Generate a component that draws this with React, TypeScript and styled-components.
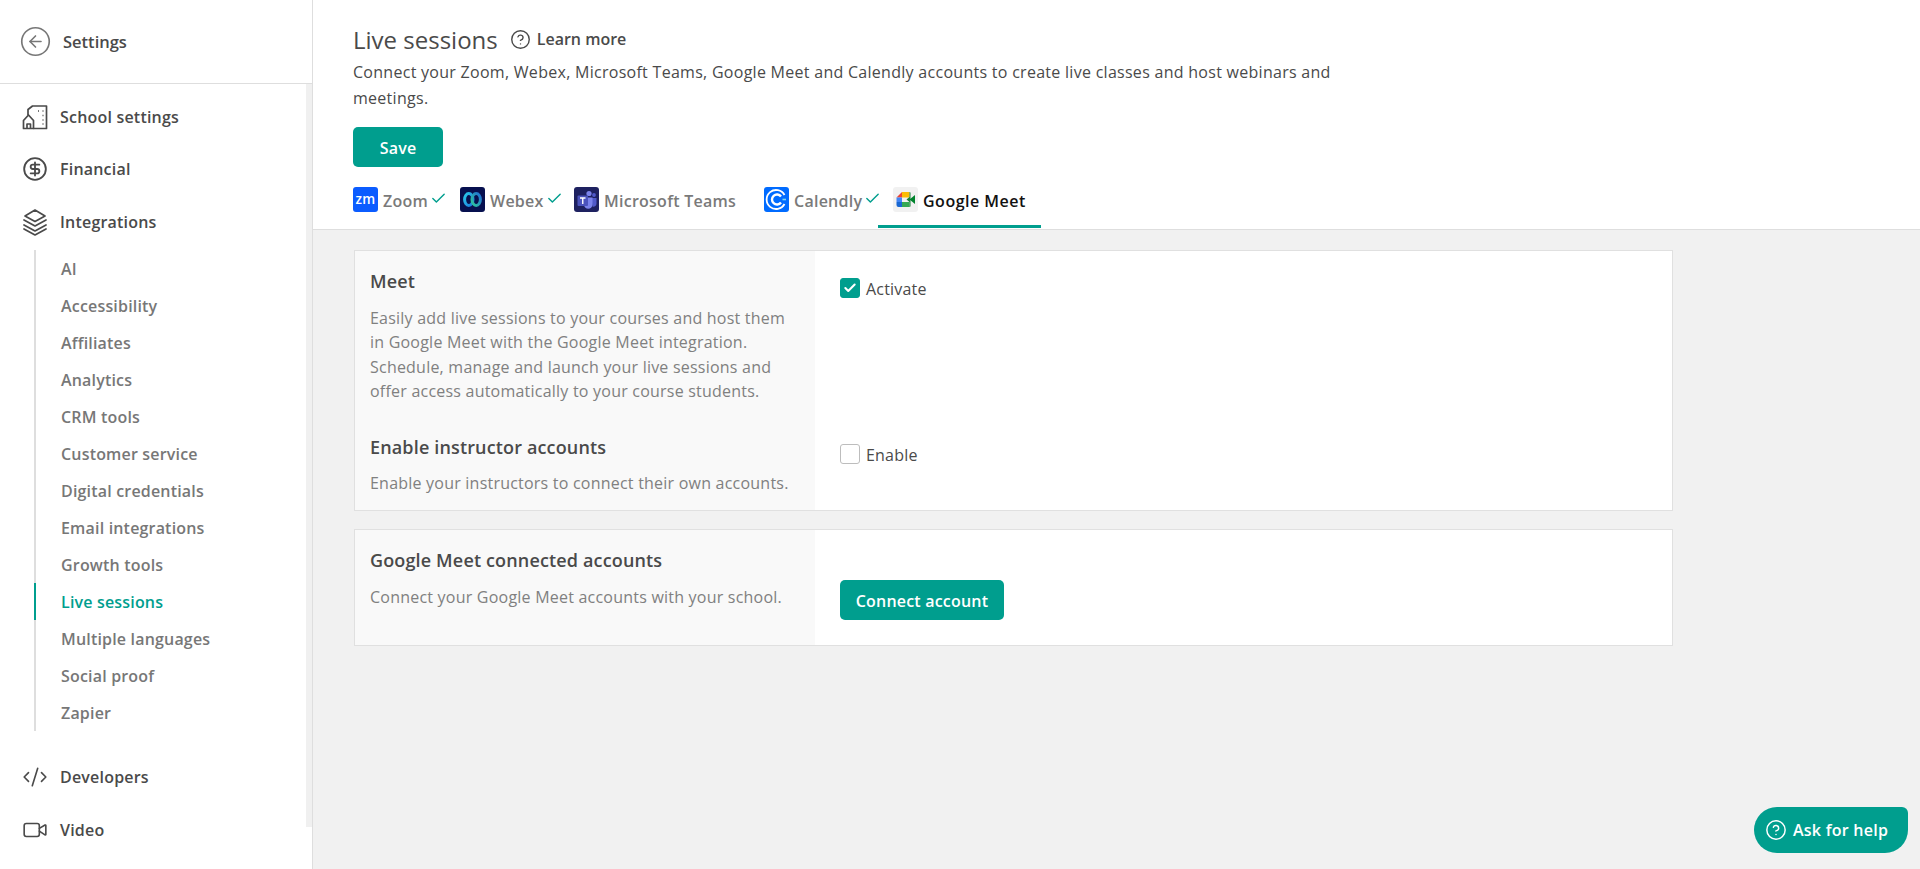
import React, { ReactElement } from 'react';
import styled, { createGlobalStyle } from 'styled-components';
import { Check, CircleArrowLeft, CircleDollarSign, CircleHelp, CodeXml, Video } from 'lucide-react';

const TEAL = '#009e8e';
const FONT = '"Open Sans", "Noto Sans", Arial, sans-serif';

const GlobalStyle = createGlobalStyle`
  html, body { margin: 0; padding: 0; height: 100%; }
  body { background: #f1f1f1; font-family: ${FONT}; color: #444; overflow: hidden; }
  * { box-sizing: border-box; }
`;

const Page = styled.div`
  display: flex;
  height: 869px;
  position: relative;
`;

const Sidebar = styled.aside`
  width: 313px;
  flex: none;
  background: #fff;
  border-right: 1px solid #dedede;
  display: flex;
  flex-direction: column;
`;

const BackRow = styled.div`
  height: 84px;
  flex: none;
  border-bottom: 1px solid #dedede;
  display: flex;
  align-items: center;
  gap: 11px;
  padding-left: 19px;
  color: #777;
  font-size: 16.5px;
  font-weight: 600;
  span { color: #4a4a4a; }
`;

const SideBody = styled.div`
  display: flex;
  flex: 1;
  min-height: 0;
`;

const Nav = styled.nav`
  flex: 1;
  padding-top: 6.5px;
`;

const Track = styled.div`
  width: 6px;
  height: 743px;
  background: #f0f0f0;
`;

const NavItem = styled.div<{ $spaced?: boolean }>`
  height: 52.5px;
  display: flex;
  align-items: center;
  gap: 12px;
  padding-left: 22px;
  margin-top: ${p => (p.$spaced ? '20px' : '0')};
  color: #4a4a4a;
  font-size: 16px;
  font-weight: 600;
  letter-spacing: 0.2px;
  svg { flex: none; }
`;

const SubList = styled.div`
  margin: 2px 0 0 34px;
  border-left: 2px solid #dedede;
`;

const SubItem = styled.div<{ $active?: boolean }>`
  height: 37px;
  margin-left: -2px;
  padding-left: 25px;
  display: flex;
  align-items: center;
  border-left: 2px solid ${p => (p.$active ? TEAL : 'transparent')};
  color: ${p => (p.$active ? TEAL : '#777')};
  font-size: 16px;
  font-weight: 600;
  letter-spacing: 0.18px;
`;

const Main = styled.main`
  flex: 1;
  min-width: 0;
  display: flex;
  flex-direction: column;
`;

const Header = styled.header`
  height: 230px;
  flex: none;
  background: #fff;
  border-bottom: 1px solid #dedede;
  padding: 22px 0 0 40px;
`;

const TitleRow = styled.div`
  display: flex;
  align-items: center;
  height: 34px;
`;

const Title = styled.h1`
  margin: 0 12px 0 0;
  font-size: 24px;
  font-weight: 500;
  color: #4a4a4a;
`;

const LearnMore = styled.a`
  display: flex;
  align-items: center;
  gap: 6px;
  font-size: 16px;
  font-weight: 600;
  color: #4a4a4a;
`;

const Lead = styled.p`
  margin: 3px 0 0;
  width: 1000px;
  font-size: 16px;
  line-height: 26px;
  color: #4a4a4a;
  letter-spacing: 0.28px;
`;

const Button = styled.button<{ $width: number }>`
  display: block;
  width: ${p => p.$width}px;
  height: 40px;
  border: 0;
  border-radius: 5px;
  padding: 2px 0 0;
  background: ${TEAL};
  color: #fff;
  font-family: ${FONT};
  font-size: 16px;
  font-weight: 600;
  letter-spacing: 0.2px;
`;

const SaveWrap = styled.div`
  margin-top: 16px;
`;

const Tabs = styled.div`
  display: flex;
  height: 61px;
`;

const Tab = styled.div<{ $active?: boolean; $width: number }>`
  width: ${p => p.$width}px;
  flex: none;
  height: 61px;
  padding: 20px 0 0 ${p => (p.$active ? 15 : 0)}px;
  display: flex;
  align-items: flex-start;
  gap: 5px;
  border-bottom: 3px solid ${p => (p.$active ? TEAL : 'transparent')};
  font-size: 16px;
  line-height: 28px;
  font-weight: 600;
  letter-spacing: ${p => (p.$active ? 0.5 : 0.25)}px;
  white-space: nowrap;
  color: ${p => (p.$active ? '#111' : '#7a7a7a')};
`;

const Done = styled(Check)`
  margin: 3px 0 0 -3px;
  flex: none;
  color: ${TEAL};
`;

const Logo = styled.svg`
  width: 25px;
  height: 25px;
  flex: none;
`;

const Content = styled.div`
  padding: 20px 0 0 41px;
  display: flex;
  flex-direction: column;
  gap: 18px;
`;

const Card = styled.section<{ $height: number }>`
  width: 1319px;
  height: ${p => p.$height}px;
  background: #fff;
  border: 1px solid #e0e0e0;
  display: flex;
`;

const CardLeft = styled.div`
  width: 460px;
  flex: none;
  background: #f9f9f9;
  padding: 16px 0 0 15px;
`;

const CardRight = styled.div`
  flex: 1;
  padding: 28px 0 0 25px;
`;

const CardTitle = styled.h3<{ $top?: number }>`
  margin: ${p => p.$top ?? 0}px 0 0;
  font-size: 18px;
  line-height: 28px;
  font-weight: 600;
  color: #4a4a4a;
  letter-spacing: 0.15px;
`;

const CardText = styled.p`
  margin: 10.5px 0 0;
  width: 425px;
  font-size: 16px;
  line-height: 24.6px;
  color: #808080;
  letter-spacing: 0.22px;
`;

const CheckRow = styled.label<{ $top?: number }>`
  display: flex;
  align-items: center;
  gap: 6px;
  height: 20px;
  margin-top: ${p => p.$top ?? 0}px;
  font-size: 16px;
  color: #4a4a4a;
  letter-spacing: 0.2px;
`;

const Box = styled.span<{ $on?: boolean }>`
  width: 20px;
  height: 20px;
  margin-top: -2px;
  border-radius: 3px;
  display: flex;
  align-items: center;
  justify-content: center;
  background: ${p => (p.$on ? TEAL : '#fff')};
  border: 1px solid ${p => (p.$on ? TEAL : '#bdbdbd')};
  color: #fff;
`;

const ConnectWrap = styled.div`
  margin-top: 22px;
`;

const HelpButton = styled.button`
  position: absolute;
  right: 12px;
  bottom: 16px;
  width: 154px;
  height: 46px;
  border: 0;
  border-radius: 23px 6px 23px 23px;
  background: ${TEAL};
  color: #fff;
  font-family: ${FONT};
  font-size: 16px;
  font-weight: 600;
  letter-spacing: 0.25px;
  display: flex;
  align-items: center;
  gap: 6px;
  padding: 0 0 0 11px;
`;

const BuildingIcon = () => (
  <svg width="26" height="26" viewBox="0 0 26 26" fill="none" stroke="#4a4a4a" strokeWidth="1.7" strokeLinejoin="round">
    <path d="M1.5 24.5v-8l5-5.5 5 5.5v8z" />
    <path d="M6 11V5.500l4.500-3.500h14v22.500h-13" />
    <path d="M5 24.500v-4.500h3.500v4.500" />
    <path d="M16 7h1M20.500 7h1M20.500 11.500h1M20.500 16h1M20.500 20h1" strokeWidth="1.400" />
  </svg>
);

const LayersIcon = () => (
  <svg width="26" height="28" viewBox="0 0 26 28" fill="none" stroke="#4a4a4a" strokeWidth="1.7" strokeLinejoin="round" strokeLinecap="round">
    <path d="M13 2l10 6-10 5.500L3 8z" />
    <path d="M2 12l11 6 11-6" />
    <path d="M2 17l11 6 11-6" />
    <path d="M2 21l11 6 11-6" />
  </svg>
);

const ZoomLogo = () => (
  <Logo viewBox="0 0 25 25">
    <rect width="25" height="25" rx="3" fill="#0b5cff" />
    <text x="12.500" y="16.500" textAnchor="middle" fontSize="13.500" fontWeight="600" fill="#fff" fontFamily={FONT}>zm</text>
  </Logo>
);

const WebexLogo = () => (
  <Logo viewBox="0 0 25 25">
    <defs>
      <linearGradient id="wxl" x1="0" x2="1" y1="0" y2="1">
        <stop offset="0" stopColor="#2ac8e8" />
        <stop offset="1" stopColor="#1a78e0" />
      </linearGradient>
      <linearGradient id="wxr" x1="1" x2="0" y1="0" y2="1">
        <stop offset="0" stopColor="#1f6fd6" />
        <stop offset="1" stopColor="#2fc79a" />
      </linearGradient>
    </defs>
    <rect width="25" height="25" rx="3" fill="#07104f" />
    <ellipse cx="8.800" cy="12.500" rx="4.200" ry="6" fill="none" stroke="url(#wxl)" strokeWidth="3" />
    <ellipse cx="16.200" cy="12.500" rx="4.200" ry="6" fill="none" stroke="url(#wxr)" strokeWidth="3" />
  </Logo>
);

const TeamsLogo = () => (
  <Logo viewBox="0 0 25 25">
    <rect width="25" height="25" rx="3" fill="#1e2160" />
    <circle cx="15" cy="6.500" r="2.600" fill="#7b83eb" />
    <circle cx="20" cy="8" r="1.900" fill="#5059c9" />
    <path d="M17.500 11h5v6a3 3 0 0 1-4 2.500z" fill="#5059c9" />
    <path d="M10 10.500h8.500v7a4.200 4.200 0 0 1-8.500 0z" fill="#7b83eb" />
    <rect x="3.500" y="8.500" width="10.500" height="10.500" rx="1" fill="#4b53bc" />
    <path d="M6 11h5.500M8.750 11v6" stroke="#fff" strokeWidth="1.400" />
  </Logo>
);

const CalendlyLogo = () => (
  <Logo viewBox="0 0 25 25">
    <rect width="25" height="25" rx="3" fill="#006bff" />
    <path d="M20.500 8a9.500 9.500 0 1 0 0 9" fill="none" stroke="#fff" strokeWidth="1.800" />
    <path d="M17 9.500a5 5 0 1 0 0 6" fill="none" stroke="#fff" strokeWidth="2.400" />
    <path d="M18.500 12.500h3.500" stroke="#7fd8f0" strokeWidth="1.600" />
  </Logo>
);

const MeetLogo = () => (
  <Logo viewBox="0 0 25 25">
    <rect width="25" height="25" rx="3" fill="#f1f1f1" />
    <path d="M9 5h7.500v5.500H9z" fill="#fbbc04" />
    <path d="M9 5v5.500H3.500z" fill="#ea4335" />
    <path d="M3.500 10.500H9v4.500H3.500z" fill="#4285f4" />
    <path d="M3.500 15H9v5H5.500a2 2 0 0 1-2-2z" fill="#1967d2" />
    <path d="M9 15h7.500v5H9z" fill="#34a853" />
    <path d="M16.500 5a1 1 0 0 1 1 1v13a1 1 0 0 1-1 1V15l-3-2.500 3-2.500z" fill="#188038" />
    <path d="M16.500 12.500l5.500-4.500v9z" fill="#00832d" />
  </Logo>
);

const SUB_ITEMS = [
  'AI',
  'Accessibility',
  'Affiliates',
  'Analytics',
  'CRM tools',
  'Customer service',
  'Digital credentials',
  'Email integrations',
  'Growth tools',
  'Live sessions',
  'Multiple languages',
  'Social proof',
  'Zapier',
];

const App = (): ReactElement => (
  <Page>
    <GlobalStyle />
    <Sidebar>
      <BackRow>
        <CircleArrowLeft size={33} strokeWidth={1.2} />
        <span>Settings</span>
      </BackRow>
      <SideBody>
        <Nav>
          <NavItem><BuildingIcon />School settings</NavItem>
          <NavItem><CircleDollarSign size={26} strokeWidth={1.7} />Financial</NavItem>
          <NavItem><LayersIcon />Integrations</NavItem>
          <SubList>
            {SUB_ITEMS.map(item => (
              <SubItem key={item} $active={item === 'Live sessions'}>{item}</SubItem>
            ))}
          </SubList>
          <NavItem $spaced><CodeXml size={26} strokeWidth={1.5} />Developers</NavItem>
          <NavItem><Video size={26} strokeWidth={1.5} />Video</NavItem>
        </Nav>
        <Track />
      </SideBody>
    </Sidebar>
    <Main>
      <Header>
        <TitleRow>
          <Title>Live sessions</Title>
          <LearnMore><CircleHelp size={21} strokeWidth={1.6} />Learn more</LearnMore>
        </TitleRow>
        <Lead>
          Connect your Zoom, Webex, Microsoft Teams, Google Meet and Calendly accounts to create live classes and host webinars and meetings.
        </Lead>
        <SaveWrap><Button $width={90}>Save</Button></SaveWrap>
        <Tabs>
          <Tab $width={107}><ZoomLogo />Zoom<Done size={17} /></Tab>
          <Tab $width={114}><WebexLogo />Webex<Done size={17} /></Tab>
          <Tab $width={190}><TeamsLogo />Microsoft Teams</Tab>
          <Tab $width={114}><CalendlyLogo />Calendly<Done size={17} /></Tab>
          <Tab $width={163} $active><MeetLogo />Google Meet</Tab>
        </Tabs>
      </Header>
      <Content>
        <Card $height={261}>
          <CardLeft>
            <CardTitle>Meet</CardTitle>
            <CardText>
              Easily add live sessions to your courses and host them in Google Meet with the Google Meet integration. Schedule, manage and launch your live sessions and offer access automatically to your course students.
            </CardText>
            <CardTitle $top={29}>Enable instructor accounts</CardTitle>
            <CardText>Enable your instructors to connect their own accounts.</CardText>
          </CardLeft>
          <CardRight>
            <CheckRow><Box $on><Check size={14} strokeWidth={3.5} /></Box>Activate</CheckRow>
            <CheckRow $top={146}><Box />Enable</CheckRow>
          </CardRight>
        </Card>
        <Card $height={117}>
          <CardLeft>
            <CardTitle>Google Meet connected accounts</CardTitle>
            <CardText>Connect your Google Meet accounts with your school.</CardText>
          </CardLeft>
          <CardRight>
            <ConnectWrap><Button $width={164}>Connect account</Button></ConnectWrap>
          </CardRight>
        </Card>
      </Content>
    </Main>
    <HelpButton><CircleHelp size={22} strokeWidth={1.6} />Ask for help</HelpButton>
  </Page>
);

export default App;
